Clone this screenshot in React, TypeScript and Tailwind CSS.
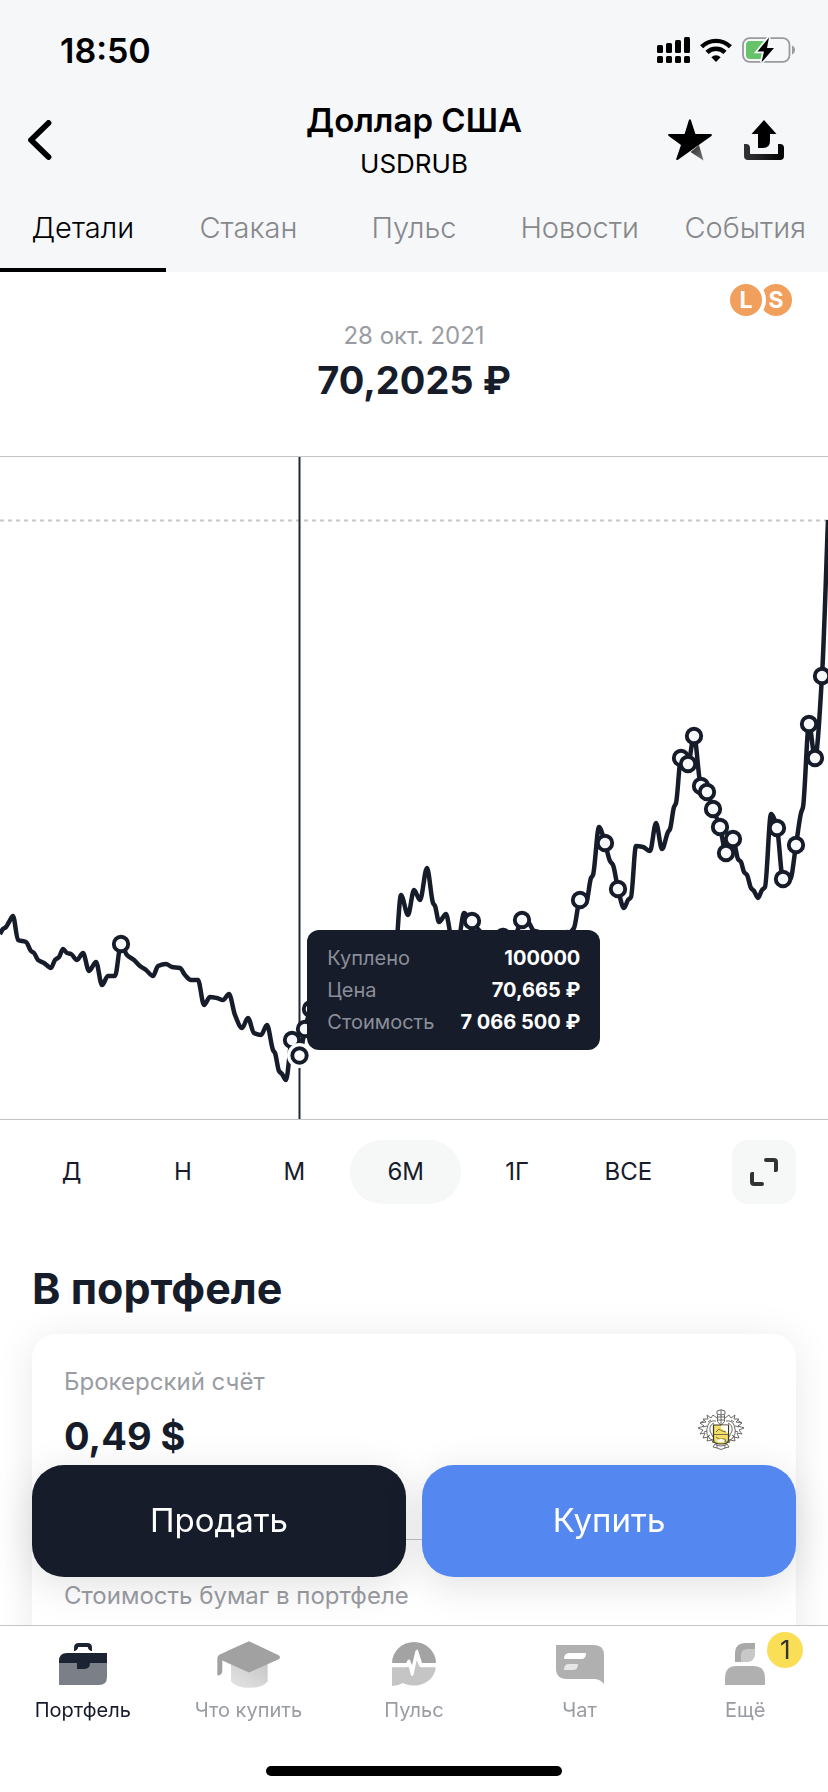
import type { ReactNode } from "react";

type Point = [number, number];

const tabs = ["Детали", "Стакан", "Пульс", "Новости", "События"];
const periods = ["Д", "Н", "М", "6М", "1Г", "ВСЕ"];

const deal = [
  { label: "Куплено", value: "100000" },
  { label: "Цена", value: "70,665 ₽" },
  { label: "Стоимость", value: "7 066 500 ₽" },
];

const prices: Point[] = [
  [0, 477], [3, 472], [6, 470], [9, 465], [13, 459], [18, 483], [26, 485], [31, 494], [34, 496],
  [38, 503], [44, 506], [51, 511], [55, 503], [59, 500], [63, 492], [67, 496], [71, 497], [77, 503],
  [83, 496], [89, 514], [96, 505], [102, 528], [108, 519], [115, 519], [121, 487], [127, 498],
  [134, 503], [140, 509], [146, 513], [153, 519], [158, 509], [166, 507], [172, 510], [180, 511],
  [185, 518], [191, 523], [198, 523], [204, 548], [210, 540], [217, 541], [223, 543], [229, 537],
  [235, 558], [242, 571], [248, 561], [254, 576], [261, 578], [267, 568], [273, 593], [275, 596],
  [279, 614], [282, 617], [286, 623], [292, 583], [299, 599], [305, 572], [311, 552],
  [324, 540], [350, 530], [375, 510], [395, 500], [401, 438], [408, 458], [414, 433], [420, 443],
  [427, 411], [433, 446], [435, 449], [439, 465], [446, 457], [452, 482], [459, 479], [464, 456],
  [471, 464], [484, 478], [497, 486], [503, 473], [509, 478], [515, 478], [522, 463], [528, 465],
  [535, 476], [554, 482], [567, 478], [574, 471], [580, 443], [586, 446], [591, 421], [593, 418],
  [599, 370], [605, 386], [610, 404], [613, 408], [618, 432], [624, 451], [628, 443], [631, 440],
  [636, 389], [643, 390], [650, 394], [656, 366], [662, 392], [668, 375], [670, 372], [674, 350],
  [676, 346], [681, 301], [688, 307], [694, 279], [701, 330], [707, 335], [713, 352], [720, 370],
  [726, 396], [733, 382], [738, 402], [741, 405], [744, 415], [747, 418], [751, 431], [754, 434],
  [758, 441], [762, 433], [765, 430], [771, 357], [777, 371], [783, 422], [790, 423], [796, 388],
  [801, 356], [803, 350], [809, 267], [815, 301], [822, 219], [828, 63],
];

const deals: Point[] = [
  [121, 487], [292, 583], [305, 572], [311, 552], [484, 483], [472, 464], [503, 480], [516, 482],
  [535, 481], [522, 463], [554, 484], [567, 482], [580, 443], [605, 386], [618, 432], [681, 301],
  [688, 307], [694, 279], [701, 329], [707, 335], [713, 352], [720, 370], [726, 396], [733, 382],
  [777, 371], [783, 422], [796, 388], [809, 267], [815, 301], [822, 219],
];

// Monotone cubic path, so peaks stay exactly on the data points
function smoothPath(points: Point[]) {
  const slope = (i: number) =>
    (points[i + 1][1] - points[i][1]) / (points[i + 1][0] - points[i][0]);
  const tangent = (i: number) => {
    if (i === 0) return slope(0);
    if (i === points.length - 1) return slope(i - 1);
    const a = slope(i - 1);
    const b = slope(i);
    return a * b <= 0 ? 0 : (2 * a * b) / (a + b);
  };
  let d = `M${points[0][0]} ${points[0][1]}`;
  for (let i = 0; i < points.length - 1; i++) {
    const [x0, y0] = points[i];
    const [x1, y1] = points[i + 1];
    const h = (x1 - x0) / 3;
    d += ` C${x0 + h} ${y0 + tangent(i) * h} ${x1 - h} ${y1 - tangent(i + 1) * h} ${x1} ${y1}`;
  }
  return d;
}

const StatusBar = () => (
  <div className="flex h-24 items-center justify-between pt-1 pr-8 pl-15">
    <span className="text-[34px] font-semibold">18:50</span>
    <div className="flex items-center gap-2.5">
      <svg width="33" height="26" viewBox="0 0 33 26">
        <rect x="0" y="8" width="6" height="8" rx="1.5" />
        <rect x="9" y="6" width="6" height="10" rx="1.5" />
        <rect x="18" y="3" width="6" height="13" rx="1.5" />
        <rect x="27" y="0" width="6" height="16" rx="1.5" />
        <rect x="0" y="19" width="6" height="7" rx="1.5" />
        <rect x="9" y="19" width="6" height="7" rx="1.5" />
        <rect x="18" y="19" width="6" height="7" rx="1.5" />
        <rect x="27" y="19" width="6" height="7" rx="1.5" />
      </svg>
      <svg width="32" height="24" viewBox="0 0 32 24" fill="none" stroke="#000" strokeWidth="4.4">
        <path d="M1.6 8.8a20.4 20.4 0 0 1 28.8 0" />
        <path d="M7 14.4a12.8 12.8 0 0 1 18 0" />
        <path d="M16 24l-4.6-4.8a6.6 6.6 0 0 1 9.2 0z" fill="#000" stroke="none" />
      </svg>
      <svg width="54" height="26" viewBox="0 0 54 26">
        <rect x="1" y="1.2" width="46.5" height="23.6" rx="6.5" fill="none" stroke="#9a9b9e" strokeWidth="1.8" />
        <path d="M50 8.5c1.9.8 3 2.5 3 4.5s-1.100 3.700-3 4.500z" fill="#9a9b9e" />
        <path d="M8 4h17v18H8a4 4 0 0 1-4-4V8a4 4 0 0 1 4-4z" fill="#66c36a" />
        <path d="M27 .5 15.500 14.500h6.500L19.500 25.500 32 11h-7z" stroke="#f6f7f9" strokeWidth="3.5" />
        <path d="M27 .5 15.500 14.500h6.500L19.500 25.500 32 11h-7z" />
      </svg>
    </div>
  </div>
);

const Header = () => (
  <header className="bg-[#f6f7f9] text-black">
    <StatusBar />
    <div className="grid grid-cols-[1fr_auto_1fr] items-center px-7">
      <button aria-label="Назад" className="justify-self-start">
        <svg width="24" height="40" viewBox="0 0 24 40" fill="none" stroke="#000" strokeWidth="5.8" strokeLinecap="round" strokeLinejoin="round">
          <path d="M20.500 3 3 20l17.500 17" />
        </svg>
      </button>
      <div className="text-center">
        <h1 className="text-[33px] leading-12 font-semibold">Доллар США</h1>
        <p className="text-[26px] leading-10">USDRUB</p>
      </div>
      <div className="flex items-center gap-8 justify-self-end pr-4">
        <button aria-label="В избранное">
          <svg width="44" height="42" viewBox="0 0 44 42">
            <defs>
              <linearGradient id="starLeg" x1="0" y1="0" x2="1" y2="1">
                <stop offset="0" stopColor="#2b2b2b" />
                <stop offset="1" stopColor="#777" />
              </linearGradient>
            </defs>
            <path d="M22.500 33 31 26l4.500 15.500z" fill="url(#starLeg)" />
            <path d="M21 .8q1-1.300 1.800 0L27.400 15H43q1.600.9.4 2L10 40.700q-2 .9-1.800-.8L13 26 .7 17q-1.300-1 .2-2h15.700z" />
          </svg>
        </button>
        <button aria-label="Поделиться">
          <svg width="40" height="40" viewBox="0 0 40 40">
            <defs>
              <linearGradient id="tray" x1="0" y1="0" x2="1" y2="0">
                <stop offset="0" stopColor="#333" />
                <stop offset=".3" stopColor="#26262a" />
                <stop offset="1" stopColor="#000" />
              </linearGradient>
            </defs>
            <path d="M0 24h2q4 0 4 4v6h28V24h2q4 0 4 4v8q0 4-4 4H4q-4 0-4-4z" fill="url(#tray)" />
            <path d="M20 0l12.500 14H26v7q0 7-7 7h-5V14H7.500z" />
          </svg>
        </button>
      </div>
    </div>
    <nav className="grid h-[88px] grid-cols-5">
      {tabs.map((tab, i) => (
        <button
          key={tab}
          className={
            i === 0
              ? "border-b-4 border-black pt-1 text-[29px] font-light"
              : "border-b-4 border-transparent pt-1 text-[29px] font-light text-[#87888b]"
          }
        >
          {tab}
        </button>
      ))}
    </nav>
  </header>
);

const Price = () => (
  <section className="border-b border-[#c3c4c7] pt-3 pb-12 text-center">
    <div className="flex justify-end pr-9 text-[23px] leading-8 font-bold text-white">
      <span className="z-10 size-8 rounded-full bg-[#f0a05c] ring-4 ring-white">L</span>
      <span className="-ml-0.5 size-8 rounded-full bg-[#f0a05c]">S</span>
    </div>
    <p className="pt-1 text-2xl leading-8 text-[#9a9ca3]">28 окт. 2021</p>
    <p className="text-[38px] leading-[56px] font-bold">70,2025 ₽</p>
  </section>
);

const Chart = () => (
  <section className="relative border-b border-[#c3c4c7]">
    <svg viewBox="0 0 828 662" className="block w-full" fill="none">
      <path d="M0 63.500H828" stroke="#c6c7c9" strokeWidth="2" strokeDasharray="4 4" />
      <path d="M299.500 0V662" stroke="#1f2937" strokeWidth="2" />
      <path d={smoothPath(prices)} stroke="#161c2a" strokeWidth="4.5" strokeLinejoin="round" />
      {deals.map(([x, y]) => (
        <circle key={x} cx={x} cy={y} r="7.2" fill="#f6f8f9" stroke="#161c2a" strokeWidth="3.9" />
      ))}
      <circle cx="299.5" cy="598.5" r="12.5" fill="#fff" />
      <circle cx="299.5" cy="598.5" r="7.2" fill="#fff" stroke="#161c2a" strokeWidth="3.9" />
    </svg>
    <dl className="absolute top-[473px] left-[37%] ml-px grid w-[293px] grid-cols-[auto_1fr] rounded-xl bg-[#161c2a] px-5 py-3 text-xl leading-8">
      {deal.map(({ label, value }) => (
        <div key={label} className="col-span-2 grid grid-cols-subgrid">
          <dt className="text-[#8b8e98]">{label}</dt>
          <dd className="text-right font-bold text-white">{value}</dd>
        </div>
      ))}
    </dl>
  </section>
);

const Periods = () => (
  <section className="flex items-center gap-12 py-5 pr-8 pl-4">
    <div className="grid flex-1 grid-cols-6">
      {periods.map((period) => (
        <button
          key={period}
          className={period === "6М" ? "h-16 rounded-[32px] bg-[#f6f8f8] text-2xl" : "h-16 text-2xl"}
        >
          {period}
        </button>
      ))}
    </div>
    <button aria-label="На весь экран" className="grid size-16 place-items-center rounded-2xl bg-[#f6f8f8]">
      <svg width="28" height="28" viewBox="0 0 28 28" fill="#333">
        <path d="M14 2q0-2 2-2h8q4 0 4 4v8q0 2-2 2h-2V4h-8q-2 0-2-2z" />
        <path d="M14 26q0 2-2 2H4q-4 0-4-4v-8q0-2 2-2h2v10h8q2 0 2 2z" />
      </svg>
    </button>
  </section>
);

const Crest = () => (
  <svg width="46" height="42" viewBox="0 0 46 42" fill="none" stroke="#5d5c58" strokeWidth=".9">
    <path d="M19 2q4-2.500 8 0v3q-4 2-8 0zM19.500 5.500v7l3.500 4 3.500-4v-7M19 8h8M20 11h6M23 1v15" />
    <g id="leaf">
      <path d="M19 9l-4-3-2 3-4-3 1 4-5 0 3 3-6 1 4 3-6 2 5 2-3 4 5-1-2 5 5-1-1 4 5-1 1 3 3-3" />
      <path d="M18 12q-6-1-8 4t-1 9l3 5 3 1M16 14q-5 2-4 8l3 6M10 13l3-2M5 18l4-1M6 23l3-1M2 14l5-3M9 28l3-2" />
    </g>
    <use href="#leaf" transform="matrix(-1 0 0 1 46 0)" />
    <path d="M15.500 16h15v15q0 4-7.500 4t-7.500-4z" fill="#f5df67" stroke="#38362e" strokeWidth="1.2" />
    <path d="M23 16.500h7v8l-3-3-4-2z" fill="#fff" stroke="none" />
    <path d="M16 25.500h14M18 23l3-3 3 2 4 1M18 28l3 2h6l1 3M20 32l2-2M25 30l2 3" stroke="#6a6040" />
    <path d="M19 31q4-2 8 0l-1 2h-6z" fill="#fff" stroke="none" />
    <path d="M17 35l-2 3 4 1q4 3 8 0l4-1-2-3q-6 4-12 0zM19 36v3M27 36v3" />
  </svg>
);

const Portfolio = () => (
  <section className="px-8 pt-8 text-2xl">
    <h2 className="pb-3.5 text-[43px] leading-16 font-bold">В портфеле</h2>
    <div className="rounded-3xl bg-white px-8 pb-32 shadow-[0_4px_40px_rgba(0,0,0,0.09)]">
      <div className="flex h-[206px] items-start justify-between border-b border-[#c3c4c7] pt-8 pr-5">
        <div>
          <p className="leading-8 text-[#9a9ca3]">Брокерский счёт</p>
          <p className="pt-2 text-[38px] leading-[60px] font-bold">0,49 $</p>
        </div>
        <div className="pt-[43px]">
          <Crest />
        </div>
      </div>
      <p className="pt-10 leading-8 text-[#9a9ca3]">Стоимость бумаг в портфеле</p>
    </div>
  </section>
);

const BriefcaseIcon = () => (
  <svg width="48" height="42" viewBox="0 0 144 126">
    <path d="M0 60h144v42q0 24-24 24H0z" fill="#7b7f87" />
    <path d="M24 30h120v30H93q0 18-18 18H54V60H0V54Q0 30 24 30z" fill="#1c2433" />
    <path d="M45 24V14Q45 0 59 0h26q14 0 14 14v10q-10 0-13-12H58q-3 12-13 12z" fill="#1c2433" />
  </svg>
);

const CapIcon = () => (
  <svg width="63" height="47" viewBox="0 0 189 140">
    <defs>
      <linearGradient id="capBase" x1="0" y1="1" x2="1" y2="0">
        <stop offset="0" stopColor="#e4e4e4" />
        <stop offset="1" stopColor="#c6c6c6" />
      </linearGradient>
    </defs>
    <path d="M42 60h110v60q-14 20-55 20t-55-20z" fill="url(#capBase)" />
    <path d="M96 0l89 42q8 6 0 12L96 94 16 58v30q0 15-15 15V52q0-9 9-13z" fill="#a1a1a1" />
  </svg>
);

const PulseIcon = () => (
  <svg width="44" height="44" viewBox="0 0 132 132">
    <path d="M0 63a66 63 0 0 1 132 0H90L78 24q-4-4-8 4L60 70l-6-16q-4-4-8 2l-3 7z" fill="#a3a3a3" />
    <path d="M0 76h42l8-2 7 26q3 4 7 0l10-45 8 18q2 3 6 3h43a66 56 0 0 1-99 47q-14 9-32 9z" fill="#c5c5c5" />
  </svg>
);

const ChatIcon = () => (
  <svg width="48" height="39" viewBox="0 0 144 117">
    <path d="M0 0h114q30 0 30 30v87q-12-15-30-15H32Q0 102 0 70z" fill="#b0b0b0" />
    <path d="M24 42q0-18 16-18h50q0 18-14 18z" fill="#fff" />
    <path d="M24 75q0-18 14-18h28q0 18-14 18z" fill="#e6e6e6" />
  </svg>
);

const PersonIcon = () => (
  <svg width="40" height="42" viewBox="0 0 120 126">
    <path d="M0 126v-21q0-36 36-36h48q36 0 36 36v21z" fill="#b0b0b0" />
    <path d="M30 57V32Q30 0 62 0h28v28q0 29-29 29z" fill="#a9a9a9" />
    <path d="M48 57V38q0-20 20-20h22v12q0 27-27 27z" fill="#c8c8c8" />
  </svg>
);

const menu: { label: string; icon: ReactNode; badge?: number }[] = [
  { label: "Портфель", icon: <BriefcaseIcon /> },
  { label: "Что купить", icon: <CapIcon /> },
  { label: "Пульс", icon: <PulseIcon /> },
  { label: "Чат", icon: <ChatIcon /> },
  { label: "Ещё", icon: <PersonIcon />, badge: 1 },
];

const BottomBar = () => (
  <div className="fixed inset-x-0 bottom-0">
    <div className="grid grid-cols-2 gap-4 px-8 pb-12 text-[33px] text-white">
      <button className="h-28 rounded-[32px] bg-[#161c2a] shadow-[0_8px_40px_rgba(0,0,0,0.12)]">Продать</button>
      <button className="h-28 rounded-[32px] bg-[#5488f0] shadow-[0_8px_40px_rgba(0,0,0,0.12)]">Купить</button>
    </div>
    <footer className="border-t border-[#c3c4c7] bg-white pb-4">
      <nav className="grid grid-cols-5 pb-10">
        {menu.map(({ label, icon, badge }, i) => (
          <a
            key={label}
            href="#"
            className={
              i === 0
                ? "relative flex flex-col items-center gap-1 pt-3 text-xl leading-8 text-[#161c2a]"
                : "relative flex flex-col items-center gap-1 pt-3 text-xl leading-8 text-[#9a9ca3]"
            }
          >
            <span className="flex h-13 items-center">{icon}</span>
            {label}
            {badge && (
              <span className="absolute top-1.5 left-1/2 ml-[22px] size-9 rounded-full bg-[#fade55] text-center text-[26px] leading-9 text-[#333]">
                {badge}
              </span>
            )}
          </a>
        ))}
      </nav>
      <div className="mx-auto h-2.5 w-74 rounded-full bg-black" />
    </footer>
  </div>
);

const App = () => {
  return (
    <div className="min-h-screen overflow-hidden bg-white font-['Inter',sans-serif] text-[#161c2a]">
      <Header />
      <main>
        <Price />
        <Chart />
        <Periods />
        <Portfolio />
      </main>
      <BottomBar />
    </div>
  );
};

export default App;
